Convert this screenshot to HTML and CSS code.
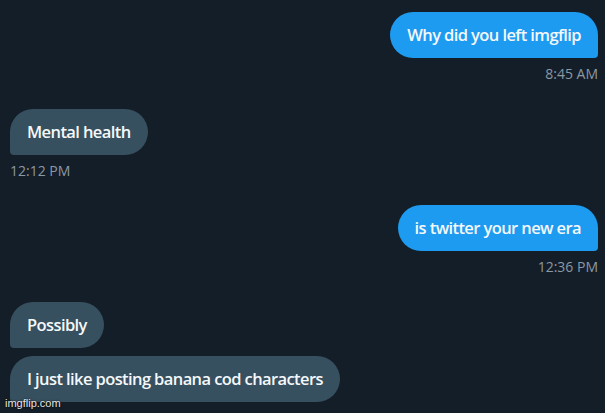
FILE: index.html
```html
<!DOCTYPE html>
<html>
<head>
<meta charset="utf-8">
<link rel="stylesheet" href="styles.css">
</head>
<body>
<div class="chat">
  <div class="group sent">
    <div class="bubble">Why did you left imgflip</div>
    <div class="time">8:45 AM</div>
  </div>
  <div class="group recv">
    <div class="bubble">Mental health</div>
    <div class="time">12:12 PM</div>
  </div>
  <div class="group sent">
    <div class="bubble">is twitter your new era</div>
    <div class="time">12:36 PM</div>
  </div>
  <div class="group recv">
    <div class="bubble">Possibly</div>
    <div class="bubble">I just like posting banana cod characters</div>
    <div class="time">12:38 PM</div>
  </div>
</div>
<div class="watermark">imgflip.com</div>
</body>
</html>
```
FILE: styles.css
```css
html, body {
  margin: 0;
  padding: 0;
  background: #141e28;
  width: 605px;
  height: 413px;
  overflow: hidden;
  font-family: "Open Sans", "Liberation Sans", sans-serif;
}
.chat {
  display: flex;
  flex-direction: column;
  padding: 12px 7px 0 10px;
  height: 413px;
  box-sizing: border-box;
  overflow: hidden;
}
.group {
  display: flex;
  flex-direction: column;
  gap: 8px;
  flex: none;
}
.sent { align-items: flex-end; margin-bottom: 27px; }
.recv { align-items: flex-start; margin-bottom: 26px; }
.bubble {
  height: 46px;
  box-sizing: border-box;
  display: flex;
  align-items: center;
  padding: 0 17px 1px;
  font-size: 16.5px;
  font-weight: 600;
  letter-spacing: -0.6px;
  color: #f5f8fa;
  border-radius: 23px;
}
.sent .bubble {
  background: #1d9bf0;
  border-bottom-right-radius: 4px;
}
.recv .bubble {
  background: #37505f;
  border-bottom-left-radius: 4px;
}
.time {
  font-size: 14px;
  line-height: 16px;
  color: #8b98a5;
  letter-spacing: 0;
}
.watermark {
  position: absolute;
  left: 5px;
  top: 397px;
  font-family: "Liberation Sans", sans-serif;
  font-size: 11px;
  color: #e6e6e6;
  text-shadow: 0 0 2px #000;
}
```
